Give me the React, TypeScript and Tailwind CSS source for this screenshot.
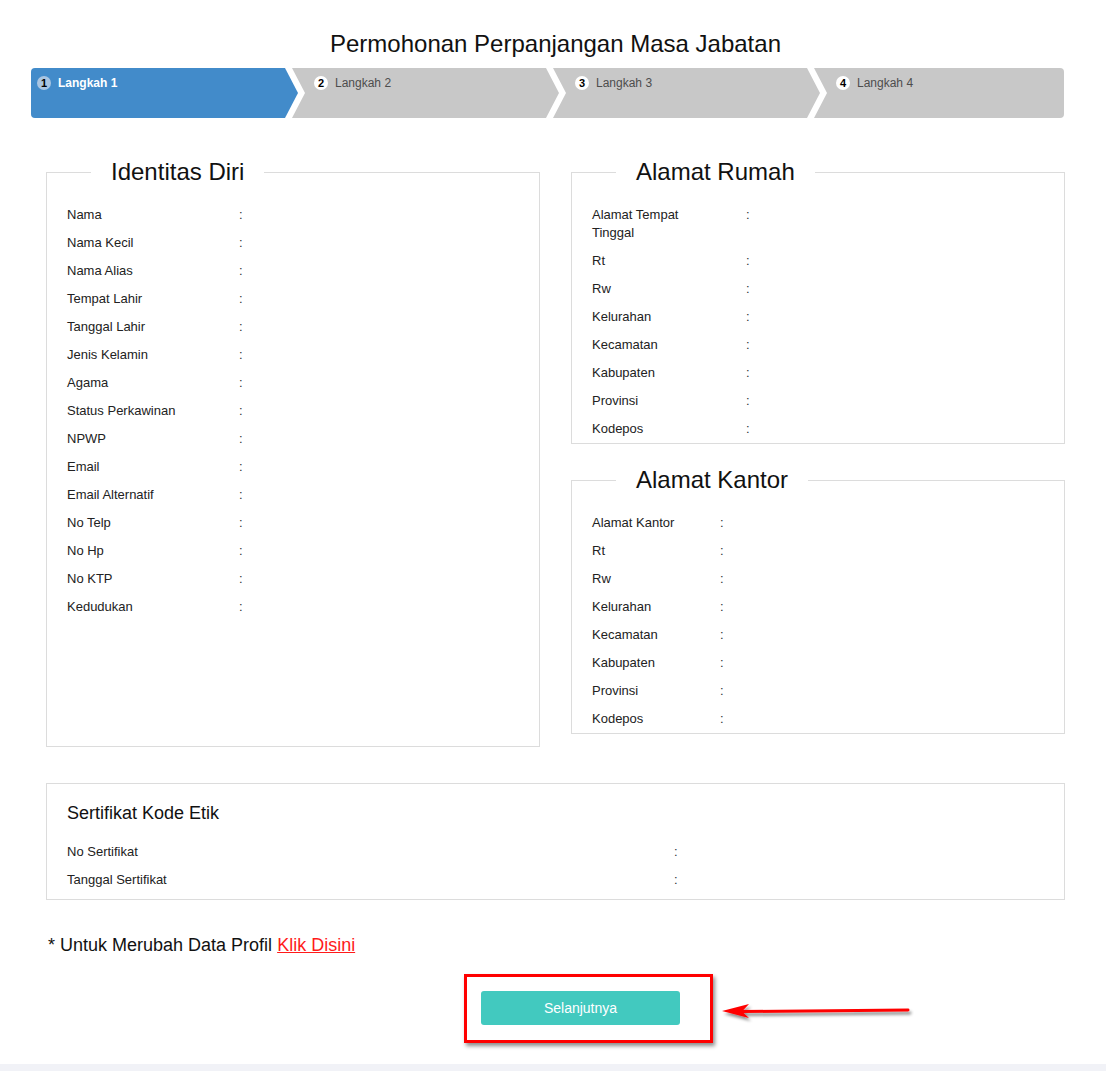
import React from "react";

const identitas: string[] = [
  "Nama",
  "Nama Kecil",
  "Nama Alias",
  "Tempat Lahir",
  "Tanggal Lahir",
  "Jenis Kelamin",
  "Agama",
  "Status Perkawinan",
  "NPWP",
  "Email",
  "Email Alternatif",
  "No Telp",
  "No Hp",
  "No KTP",
  "Kedudukan",
];

const alamatRumah: string[] = [
  "Alamat Tempat Tinggal",
  "Rt",
  "Rw",
  "Kelurahan",
  "Kecamatan",
  "Kabupaten",
  "Provinsi",
  "Kodepos",
];

const alamatKantor: string[] = [
  "Alamat Kantor",
  "Rt",
  "Rw",
  "Kelurahan",
  "Kecamatan",
  "Kabupaten",
  "Provinsi",
  "Kodepos",
];

const steps = ["Langkah 1", "Langkah 2", "Langkah 3", "Langkah 4"];

// label column widths differ per panel, written out so tailwind picks them up
const DataRows = ({ items, labelClass }: { items: string[]; labelClass: string }) => (
  <div className="flex flex-col">
    {items.map((label) => (
      <div key={label} className="flex py-[5px] text-[13px] leading-[18px] text-[#222]">
        <div className={labelClass}>{label}</div>
        <div className="text-[#333]">:</div>
      </div>
    ))}
  </div>
);

const Panel = ({
  title,
  className,
  children,
}: {
  title: string;
  className: string;
  children: React.ReactNode;
}) => (
  <fieldset className={`border border-[#dcdcdc] px-[20px] ${className}`}>
    <legend className="ml-[24px] px-5 text-[24px] leading-[26px] text-[#111]">{title}</legend>
    <div className="pt-[16px]">{children}</div>
  </fieldset>
);

const StepBar = () => (
  <div className="-ml-[15px] flex h-[50px] w-[1033px]">
    {steps.map((s, i) => {
      const active = i === 0;
      const first = i === 0;
      const last = i === steps.length - 1;
      let shape = "";
      if (first) {
        shape =
          "w-[267px] rounded-l-[4px] [clip-path:polygon(0_0,calc(100%_-_13px)_0,100%_50%,calc(100%_-_13px)_100%,0_100%)]";
      } else if (last) {
        shape =
          "flex-1 -ml-[6px] rounded-r-[4px] [clip-path:polygon(0_0,100%_0,100%_100%,0_100%,13px_50%)]";
      } else {
        shape =
          "w-[267px] -ml-[6px] [clip-path:polygon(0_0,calc(100%_-_13px)_0,100%_50%,calc(100%_-_13px)_100%,0_100%,13px_50%)]";
      }
      return (
        <div
          key={s}
          className={`${shape} ${active ? "bg-[#428bca]" : "bg-[#c8c8c8]"} flex items-start pt-[8px] ${
            first ? "pl-[6px]" : "pl-[22px]"
          }`}
        >
          <span
            className={`flex h-[14px] w-[14px] items-center justify-center rounded-full text-[11px] font-bold leading-none text-black ${
              active ? "bg-[#a9c5e2]" : "bg-white"
            }`}
          >
            {i + 1}
          </span>
          <span
            className={`ml-[7px] text-[12px] leading-[14px] ${
              active ? "font-bold text-white" : "text-[#4d4d4d]"
            }`}
          >
            {s}
          </span>
        </div>
      );
    })}
  </div>
);

export default function App() {
  return (
    <div
      className="relative min-h-[1071px] w-[1106px] bg-[#f1f2f7]"
      style={{ fontFamily: '"Liberation Sans", Arial, sans-serif' }}
    >
      <div className="bg-white pb-[39px]">
        <div className="ml-[46px] w-[1019px]">
          <h1 className="pt-[30px] text-center text-[24px] leading-[28px] text-[#111]">
            Permohonan Perpanjangan Masa Jabatan
          </h1>

          <div className="mt-[10px]">
            <StepBar />
          </div>

          <div className="mt-[41px] flex gap-[31px]">
            <Panel title="Identitas Diri" className="h-[588px] w-[494px]">
              <DataRows items={identitas} labelClass="w-[172px]" />
            </Panel>

            <div className="flex w-[494px] flex-col">
              <Panel title="Alamat Rumah" className="w-[494px]">
                <DataRows items={alamatRumah} labelClass="w-[154px] pr-[40px]" />
              </Panel>
              <Panel title="Alamat Kantor" className="mt-[23px] w-[494px]">
                <DataRows items={alamatKantor} labelClass="w-[128px]" />
              </Panel>
            </div>
          </div>

          <div className="mt-[36px] border border-[#dcdcdc] px-[20px] pt-[18px] pb-[5px]">
            <div className="text-[18px] leading-[22px] text-[#111]">Sertifikat Kode Etik</div>
            <div className="mt-[14px]">
              <DataRows items={["No Sertifikat", "Tanggal Sertifikat"]} labelClass="w-[607px]" />
            </div>
          </div>

          <p className="mt-[34px] pl-[2px] text-[18px] leading-[22px] text-[#111]">
            * Untuk Merubah Data Profil{" "}
            <a href="#" className="text-[#ff1a1a] underline">
              Klik Disini
            </a>
          </p>

          <div className="mt-[35px] pl-[435px]">
            <button className="h-[34px] w-[199px] rounded-[3px] bg-[#42c9bf] text-[14px] text-white">
              Selanjutnya
            </button>
          </div>
        </div>
      </div>

      {/* annotation box around the button */}
      <div className="absolute left-[464px] top-[974px] h-[69px] w-[249px] border-[3px] border-[#ff0000] shadow-[2px_3px_4px_rgba(0,0,0,0.45)]" />

      {/* annotation arrow */}
      <svg
        className="absolute left-[715px] top-[995px]"
        width="205"
        height="35"
        viewBox="0 0 205 35"
      >
        <defs>
          <filter id="sh" x="-10%" y="-50%" width="130%" height="200%">
            <feDropShadow dx="2" dy="3" stdDeviation="1.8" floodColor="#000" floodOpacity="0.45" />
          </filter>
        </defs>
        <g filter="url(#sh)">
          <line x1="26" y1="16.5" x2="193" y2="15" stroke="#ff0000" strokeWidth="3" strokeLinecap="round" />
          <polygon points="7,16 34,9 27,16.5 34,23" fill="#ff0000" />
        </g>
      </svg>
    </div>
  );
}
